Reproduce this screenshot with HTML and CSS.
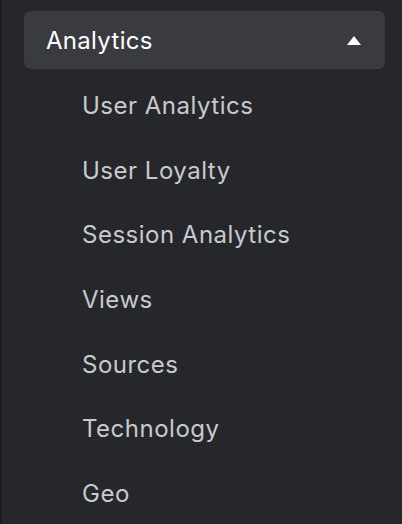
FILE: index.html
```html
<!DOCTYPE html>
<html>
<head>
<meta charset="utf-8">
<link rel="stylesheet" href="styles.css">
</head>
<body>
<nav class="sidebar">
  <div class="group">
    <button class="group-header">
      <span class="group-title">Analytics</span>
      <svg class="caret" width="14" height="9" viewBox="0 0 14 9"><polygon points="7,0 14,9 0,9" fill="#ffffff"/></svg>
    </button>
    <ul class="items">
      <li class="item">User Analytics</li>
      <li class="item">User Loyalty</li>
      <li class="item">Session Analytics</li>
      <li class="item">Views</li>
      <li class="item">Sources</li>
      <li class="item">Technology</li>
      <li class="item">Geo</li>
    </ul>
  </div>
</nav>
</body>
</html>
```
FILE: styles.css
```css
html, body {
  margin: 0;
  padding: 0;
  height: 100%;
  background: #25272b;
}
body {
  font-family: Inter, "Noto Sans", sans-serif;
}
.sidebar {
  box-sizing: border-box;
  height: 524px;
  border-left: 2px solid #1d1e21;
  padding: 11px 17px 0 22px;
}
.group-header {
  box-sizing: border-box;
  width: 100%;
  height: 58px;
  display: flex;
  align-items: center;
  justify-content: space-between;
  padding: 0 24px 0 22px;
  border: none;
  border-radius: 7px;
  background: #3a3b40;
  color: #ffffff;
  font-family: inherit;
  cursor: pointer;
}
.group-title {
  font-size: 24px;
  letter-spacing: 0.3px;
  font-weight: 400;
}
.caret {
  display: block;
}
.items {
  list-style: none;
  margin: 0;
  padding: 4px 0 0 58px;
}
.item {
  height: 64.7px;
  display: flex;
  align-items: center;
  font-size: 24px;
  letter-spacing: 0.5px;
  color: #c9cacd;
}
```
